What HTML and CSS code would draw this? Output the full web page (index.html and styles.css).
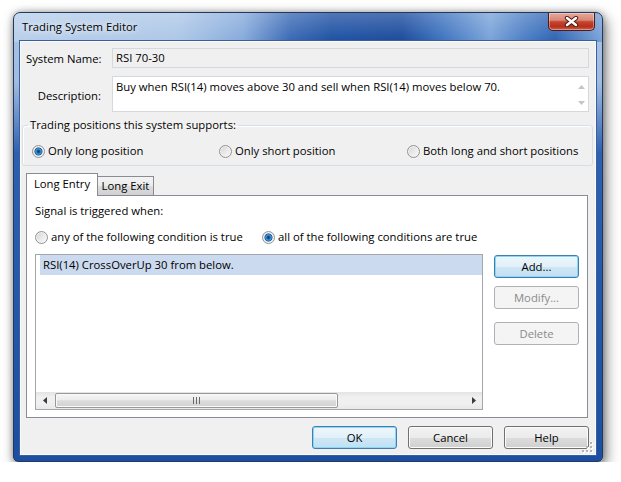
FILE: index.html
```html
<!DOCTYPE html>
<html>
<head>
<meta charset="utf-8">
<title>Trading System Editor</title>
<link rel="stylesheet" href="styles.css">
</head>
<body>
<div class="window">
  <div class="titlebar">
    <span class="title">Trading System Editor</span>
    <div class="close-btn">
      <svg width="19" height="11" viewBox="0 0 19 11">
        <path d="M5 2 L14 9 M14 2 L5 9" stroke="#4d1a12" stroke-width="4.4" stroke-linecap="round" fill="none"/>
        <path d="M5 2 L14 9 M14 2 L5 9" stroke="#ffffff" stroke-width="2.4" stroke-linecap="round" fill="none"/>
      </svg>
    </div>
  </div>
  <div class="client">
    <div class="form-grid">
      <span class="lbl">System Name:</span>
      <div class="field readonly">RSI 70-30</div>
      <span class="lbl lbl-desc">Description:</span>
      <div class="field memo">
        <span class="memo-text">Buy when RSI(14) moves above 30 and sell when RSI(14) moves below 70.</span>
        <div class="vscroll">
          <svg width="7" height="4" viewBox="0 0 7 4"><path d="M0 4 L3.5 0 L7 4Z" fill="#c4c4c4"/></svg>
          <svg width="7" height="4" viewBox="0 0 7 4"><path d="M0 0 L3.5 4 L7 0Z" fill="#c4c4c4"/></svg>
        </div>
      </div>
    </div>

    <fieldset class="group">
      <legend>Trading positions this system supports:</legend>
      <div class="pos-row">
        <span class="opt"><span class="radio on"></span>Only long position</span>
        <span class="opt"><span class="radio"></span>Only short position</span>
        <span class="opt"><span class="radio"></span>Both long and short positions</span>
      </div>
    </fieldset>

    <div class="tabs">
      <div class="tabstrip">
        <div class="tab active">Long Entry</div>
        <div class="tab">Long Exit</div>
      </div>
      <div class="panel">
        <div class="signal">Signal is triggered when:</div>
        <div class="cond-row">
          <span class="opt opt-any"><span class="radio"></span>any of the following condition is true</span>
          <span class="opt"><span class="radio on"></span>all of the following conditions are true</span>
        </div>
        <div class="list-area">
          <div class="listbox">
            <div class="items">
              <div class="item sel">RSI(14) CrossOverUp 30 from below.</div>
            </div>
            <div class="hscroll">
              <div class="hs-arrow"><svg width="4" height="7" viewBox="0 0 4 7"><path d="M4 0 L0 3.5 L4 7Z" fill="#3c3c3c"/></svg></div>
              <div class="thumb">
                <svg width="7" height="7" viewBox="0 0 7 7"><path d="M0 0h1v7H0zM3 0h1v7H3zM6 0h1v7H6z" fill="#6a6a6a"/></svg>
              </div>
              <div class="hs-track"></div>
              <div class="hs-arrow"><svg width="4" height="7" viewBox="0 0 4 7"><path d="M0 0 L4 3.5 L0 7Z" fill="#3c3c3c"/></svg></div>
            </div>
          </div>
          <div class="side-btns">
            <div class="btn default">Add...</div>
            <div class="btn disabled btn-modify">Modify...</div>
            <div class="btn disabled btn-delete">Delete</div>
          </div>
        </div>
      </div>
    </div>

    <div class="footer">
      <div class="btn default">OK</div>
      <div class="btn">Cancel</div>
      <div class="btn">Help</div>
    </div>

    <svg class="grip" width="11" height="11" viewBox="0 0 11 11">
      <g fill="#ffffff">
        <rect x="9" y="1" width="2" height="2"/><rect x="9" y="5" width="2" height="2"/><rect x="5" y="5" width="2" height="2"/>
        <rect x="9" y="9" width="2" height="2"/><rect x="5" y="9" width="2" height="2"/><rect x="1" y="9" width="2" height="2"/>
      </g>
      <g fill="#b4b4b4">
        <rect x="8" y="0" width="2" height="2"/><rect x="8" y="4" width="2" height="2"/><rect x="4" y="4" width="2" height="2"/>
        <rect x="8" y="8" width="2" height="2"/><rect x="4" y="8" width="2" height="2"/><rect x="0" y="8" width="2" height="2"/>
      </g>
    </svg>
  </div>
</div>
</body>
</html>
```

FILE: styles.css
```css
* { box-sizing: border-box; }

body {
  margin: 0;
  background: #ffffff;
  font-family: "Open Sans", "Segoe UI", sans-serif;
  font-size: 11.3px;
  line-height: 15px;
  color: #000000;
}

.window {
  margin: 12px 0 0 13px;
  width: 590px;
  height: 450px;
  padding: 0 6px 6px;
  border: 1px solid #22385c;
  border-radius: 7px 7px 5px 5px;
  display: flex;
  flex-direction: column;
  background:
    linear-gradient(to bottom, rgba(255,255,255,0.22), rgba(255,255,255,0) 28px) top left / 100% 29px no-repeat,
    linear-gradient(to right, #b8cfea 0%, #adc7e7 28%, #86aadb 39%, #3a69b5 47%, #1f51a3 54%, #1b4b9d 66%, #3f74c0 73%, #7aa3d9 81%, #4b7dc4 87%, #2f63b3 92%, #7aa2d8 100%) top left / 100% 29px no-repeat,
    linear-gradient(to bottom, #aac4e6 0, #9fbbe2 70px, #2d60b2 140px, #1c4ea2 100%);
  box-shadow: 3px 5px 14px rgba(0,0,0,0.5), 0 0 6px rgba(0,0,0,0.3);
}

.titlebar {
  height: 28px;
  display: flex;
  align-items: flex-start;
  justify-content: space-between;
  flex: none;
}

.title {
  margin: 6px 0 0 2px;
  text-shadow: 0 0 6px #ffffff, 0 0 10px rgba(255,255,255,0.7);
}

.close-btn {
  width: 47px;
  height: 18px;
  margin-right: 1px;
  border: 1px solid #4e1c15;
  border-top: none;
  border-radius: 0 0 5px 5px;
  background: linear-gradient(#e6a99b 0%, #d98677 42%, #c4442f 52%, #b7301c 80%, #d0624b 100%);
  box-shadow: inset 0 0 0 1px rgba(255,255,255,0.35);
  display: flex;
  align-items: center;
  justify-content: center;
}

.client {
  flex: 1;
  position: relative;
  background: #f0f0f0;
  border: 1px solid #f8fafc;
  box-shadow: 0 0 0 1px #3b5f98;
  display: flex;
  flex-direction: column;
}

/* name / description */
.form-grid {
  display: grid;
  grid-template-columns: 86px 1fr;
  row-gap: 8px;
  padding: 6px 6px 0 5px;
}

.lbl {
  text-align: right;
  padding-right: 11px;
  align-self: center;
  white-space: nowrap;
}

.lbl-desc {
  align-self: start;
  margin-top: 12px;
}

.field {
  border: 1px solid #d5d9de;
  height: 20px;
  padding: 0 3px;
  line-height: 18px;
}

.readonly { background: #f0f0f0; }

.memo {
  height: 36px;
  background: #ffffff;
  display: flex;
  padding: 0;
  line-height: 15px;
}

.memo-text {
  flex: 1;
  padding: 2px 3px;
}

.vscroll {
  width: 14px;
  display: flex;
  flex-direction: column;
  justify-content: space-between;
  align-items: center;
  padding: 8px 0 6px;
}

.vscroll svg { display: block; }

/* group box */
.group {
  margin: 5px 2px 0 1px;
  padding: 0 0 6px 5px;
  border: 1px solid #d5dfe5;
  border-radius: 3px;
  box-shadow: inset 1px 1px 0 #ffffff;
  min-width: 0;
}

.group legend {
  padding: 0 2px;
  line-height: 16px;
}

.pos-row {
  display: grid;
  grid-template-columns: 187px 188px auto;
  padding: 10px 0 0 4px;
  line-height: 16px;
}

.opt {
  display: flex;
  align-items: center;
  white-space: nowrap;
}

.radio {
  flex: none;
  width: 13px;
  height: 13px;
  margin-right: 3px;
  border-radius: 50%;
  border: 1px solid #939393;
  background: linear-gradient(135deg, #d2d2d2 0%, #e9e9e9 50%, #fbfbfb 100%);
  box-shadow: inset 0 0 0 1px #f2f2f2;
}

.radio.on {
  background:
    radial-gradient(circle at 50% 50%, #0f2f52 0, #1d5b95 1.4px, #3fa0e4 2.7px, #1a5a98 3.7px, rgba(30,80,130,0) 4.4px),
    linear-gradient(135deg, #d2d2d2 0%, #e9e9e9 50%, #fbfbfb 100%);
}

/* tabs */
.tabs {
  margin: 7px 7px 0 5px;
}

.tabstrip {
  display: flex;
  align-items: flex-start;
  height: 23px;
  margin-bottom: -1px;
  position: relative;
  z-index: 1;
}

.tab {
  width: 56px;
  height: 19px;
  margin-top: 3px;
  border: 1px solid #898c95;
  border-bottom: none;
  border-left: none;
  background: linear-gradient(#f3f3f3 0%, #ebebeb 50%, #dddddd 51%, #d0d0d0 100%);
  text-align: center;
  line-height: 18px;
}

.tab.active {
  width: 72px;
  height: 23px;
  margin-top: 0;
  border-left: 1px solid #898c95;
  background: #ffffff;
  line-height: 20px;
}

.panel {
  height: 223px;
  border: 1px solid #898c95;
  background: #ffffff;
}

.signal {
  margin: 7px 0 0 8px;
}

.cond-row {
  display: flex;
  margin: 11px 0 0 8px;
  line-height: 16px;
}

.opt-any { width: 227px; }

.list-area {
  display: flex;
  margin: 9px 0 0 8px;
}

.listbox {
  width: 448px;
  height: 156px;
  border: 1px solid #a3a7ad;
  display: flex;
  flex-direction: column;
}

.items {
  flex: 1;
  padding-left: 4px;
}

.item {
  height: 20px;
  line-height: 20px;
  padding-left: 3px;
}

.item.sel { background: #cbdaee; }

.hscroll {
  height: 17px;
  display: flex;
  align-items: center;
  background: linear-gradient(#e3e3e3 0%, #f0f0f0 30%, #f0f0f0 70%, #e8e8e8 100%);
}

.hs-arrow {
  width: 17px;
  height: 17px;
  display: flex;
  align-items: center;
  justify-content: center;
  flex: none;
}

.thumb {
  width: 283px;
  height: 15px;
  margin-left: 2px;
  border: 1px solid #989898;
  border-radius: 2px;
  background: linear-gradient(#f6f6f6 0%, #ececec 45%, #dcdcdc 52%, #d2d2d2 100%);
  box-shadow: inset 0 0 0 1px #fafafa;
  display: flex;
  align-items: center;
  justify-content: center;
}

.hs-track { flex: 1; }

.side-btns {
  margin-left: 11px;
  padding-top: 1px;
  display: flex;
  flex-direction: column;
}

.btn-modify { margin-top: 8px; }
.btn-delete { margin-top: 13px; }

.btn {
  width: 85px;
  height: 23px;
  border: 1px solid #707070;
  border-radius: 3px;
  display: flex;
  align-items: center;
  justify-content: center;
  background: linear-gradient(#f2f2f2 0%, #ebebeb 50%, #dddddd 51%, #cfcfcf 100%);
  box-shadow: inset 0 0 0 1px #fbfbfb;
}

.btn.default {
  border-color: #3c7fb1;
  background: linear-gradient(#eef7fc 0%, #e1f0f9 50%, #cfe7f5 51%, #c1e0f2 100%);
  box-shadow: inset 0 0 0 1px #8ad6f5;
}

.btn.disabled {
  border-color: #adb2b5;
  background: #f4f4f4;
  box-shadow: none;
  color: #8a8a8a;
}

.footer {
  display: flex;
  justify-content: flex-end;
  gap: 11px;
  margin-top: 8px;
  padding-right: 6px;
}

.grip {
  position: absolute;
  right: 2px;
  bottom: 1px;
}
```
